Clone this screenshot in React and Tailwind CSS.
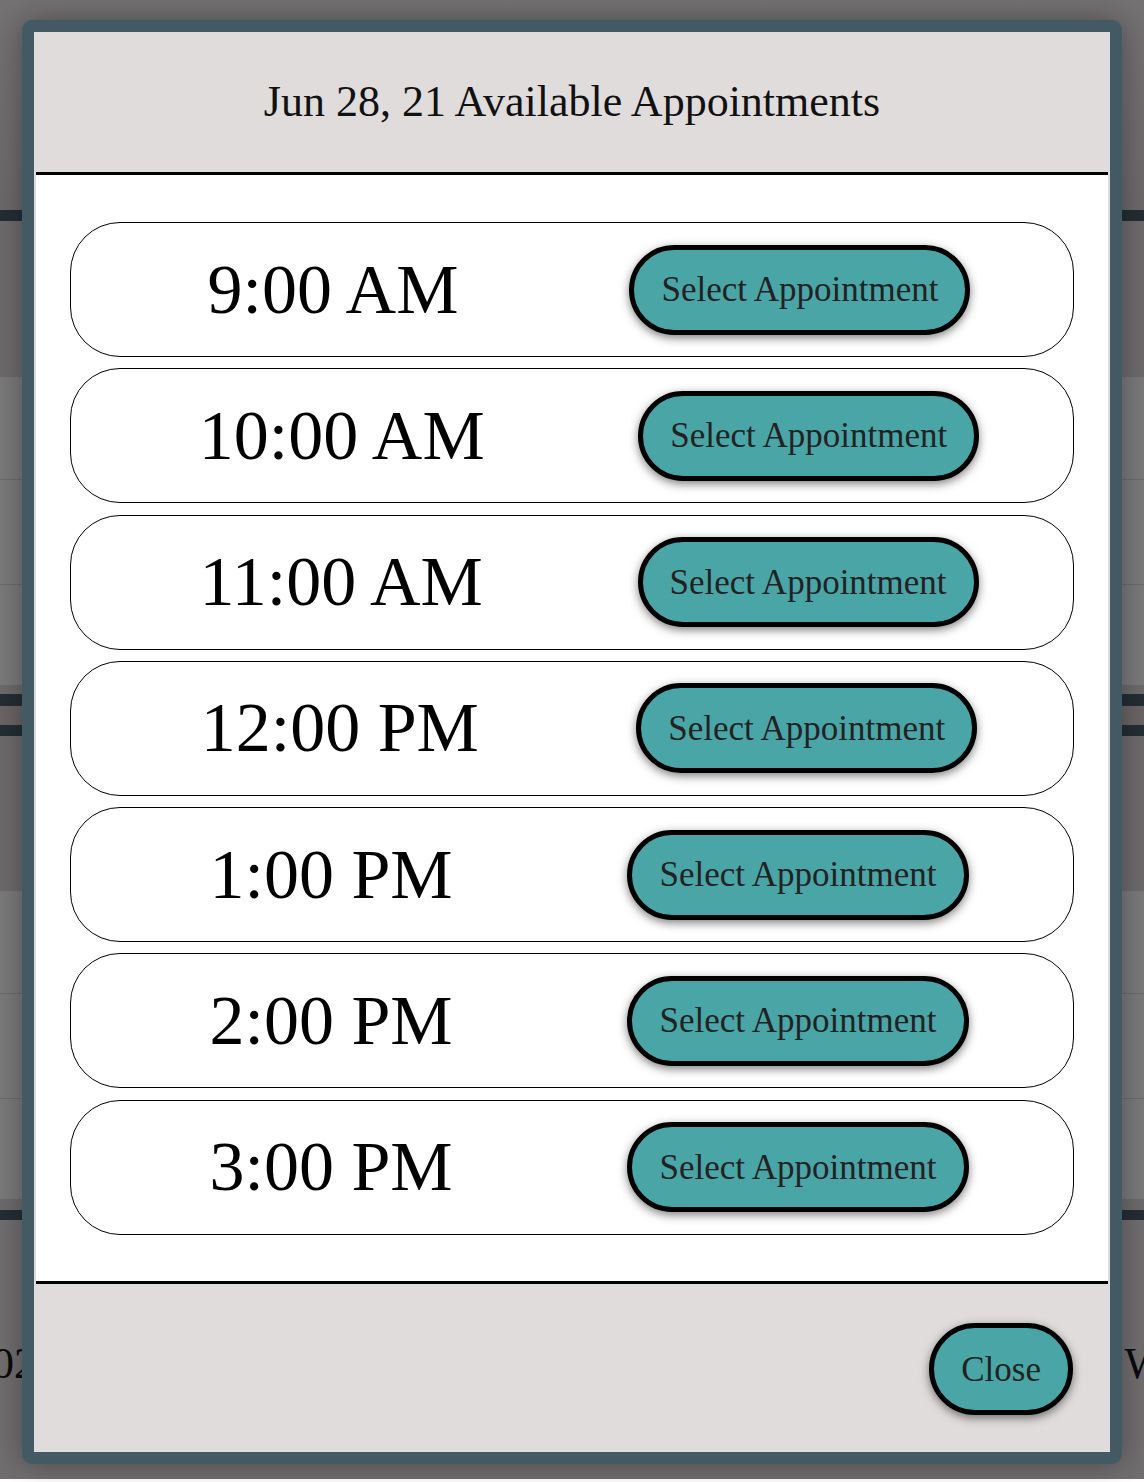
import React from 'react';

const serif = { fontFamily: '"Liberation Serif", "Times New Roman", serif' };

const slots = ['9:00 AM', '10:00 AM', '11:00 AM', '12:00 PM', '1:00 PM', '2:00 PM', '3:00 PM'];

// page behind the overlay, already dimmed
function Backdrop() {
  const Dark = ({ h }) => <div className={`${h} bg-[#232e34]`} />;
  const Rows = () => (
    <div className="bg-[#7b7b7b]">
      <div className="h-[103px] border-b border-[#6c6c6c]" />
      <div className="h-[105px] border-b border-[#6c6c6c]" />
      <div className="h-[100px]" />
    </div>
  );

  return (
    <div className="flex flex-col">
      <div className="h-[210px] bg-gradient-to-b from-[#747272] to-[#6b6969]" />
      <Dark h="h-[11px]" />
      <div className="h-[156px] bg-[#6d6b6b]" />
      <Rows />
      <div className="h-[9px] bg-[#6d6a6a]" />
      <Dark h="h-[12px]" />
      <div className="h-[19px] bg-[#6b6565]" />
      <Dark h="h-[11px]" />
      <div className="h-[155px] bg-[#6d6b6b]" />
      <Rows />
      <div className="h-[11px] bg-[#6d6b6b]" />
      <Dark h="h-[10px]" />
      <div className="h-[259px] bg-[#706e6e]">
        <div className="mt-[122px] flex justify-between text-[44px] leading-none text-[#0a0a0a]">
          <span className="-ml-[8px]">02</span>
          <span className="-mr-[22px]">W</span>
        </div>
      </div>
    </div>
  );
}

function TealButton({ children, className = '' }) {
  return (
    <button
      className={`h-[90px] px-[27px] rounded-full border-[5px] border-black bg-[#4aa5a7] text-[35px] leading-none text-[#222] shadow-[0_3px_10px_rgba(0,0,0,0.5)] ${className}`}
    >
      {children}
    </button>
  );
}

export default function App() {
  return (
    <div className="relative h-[1482px] w-full overflow-hidden" style={serif}>
      <Backdrop />

      {/* modal */}
      <div className="absolute left-[22px] top-[20px] w-[1100px] h-[1444px] flex flex-col rounded-[10px] border-[12px] border-[#435a65] bg-[#e0dcdc] px-[2px] shadow-[0_0_30px_rgba(0,0,0,0.35)]">
        <div className="h-[140px] flex items-center justify-center text-[44px] text-[#111]">
          Jun 28, 21 Available Appointments
        </div>

        <div className="bg-white border-y-[3px] border-black px-[34px] pt-[47px] pb-[46px] flex flex-col gap-[11.3px]">
          {slots.map((t) => (
            <div
              key={t}
              className="h-[135px] rounded-[50px] border border-black flex items-center justify-around pl-[51px] pr-[17px]"
            >
              <span className="text-[70px] leading-none text-black">{t}</span>
              <TealButton>Select Appointment</TealButton>
            </div>
          ))}
        </div>

        <div className="flex-1 flex items-center justify-end pr-[35px] pt-[3px]">
          <TealButton className="h-[92px]">Close</TealButton>
        </div>
      </div>
    </div>
  );
}
